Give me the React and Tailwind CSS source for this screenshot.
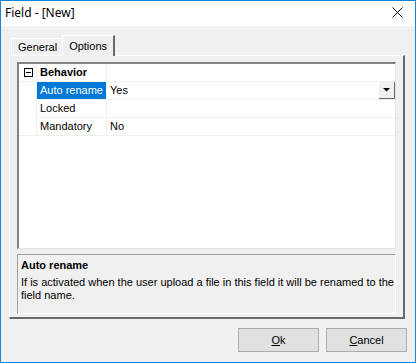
import React from 'react';

const rows = [
  { name: 'Auto rename', value: 'Yes', selected: true },
  { name: 'Locked', value: '' },
  { name: 'Mandatory', value: 'No' },
];

function DropArrow() {
  return (
    <div className="absolute right-0 top-0 w-[16px] h-[17px] bg-[#f0f0f0] border-r border-b border-[#696969] flex items-center justify-center">
      <svg width="9" height="6" viewBox="0 0 9 6">
        <path d="M1 1 H8 L4.5 4.5 Z" fill="#000" />
      </svg>
    </div>
  );
}

export default function App() {
  return (
    <div className="w-[416px] h-[363px] border border-[#1883d7] bg-[#f0f0f0] flex flex-col text-[11px] text-black font-['Liberation_Sans',Arial,sans-serif] select-none">
      {/* title bar */}
      <div className="h-[25px] bg-white flex items-center justify-between pl-[4px] pr-[12px] shrink-0">
        <span className="text-[12px] font-['Noto_Sans','Liberation_Sans',sans-serif] mt-[-2px]">Field - [New]</span>
        <svg width="11" height="11" viewBox="0 0 11 11" className="mt-[-2px]">
          <path d="M0.5 0.5 L10.5 10.5 M10.5 0.5 L0.5 10.5" stroke="#000" strokeWidth="1" />
        </svg>
      </div>

      {/* tabs */}
      <div className="flex items-end pl-[10px] mt-[8px] h-[21px] shrink-0">
        <div className="h-[17px] px-[6px] flex items-center border-t border-l border-white border-r-0 mr-[-1px] text-[#000]">General</div>
        <div className="h-[21px] px-[6px] flex items-center border-t border-l border-white border-r-2 border-r-[#696969] relative top-[1px] bg-[#f0f0f0] z-10">Options</div>
      </div>

      {/* tab page */}
      <div className="ml-[8px] w-[396px] h-[264px] border-t border-l border-white border-r-2 border-b-2 border-r-[#696969] border-b-[#696969] flex flex-col pt-[6px] px-[7px] pb-[3px] gap-[5px] shrink-0">
        {/* property grid */}
        <div className="h-[187px] bg-white border-t-2 border-l-2 border-[#828282] border-r border-b border-r-[#e3e3e3] border-b-[#e3e3e3] flex flex-col">
          <div className="flex h-[18px] border-b border-[#f0f0f0]">
            <div className="w-[18px] border-r border-[#f0f0f0] flex items-center justify-center pl-[2px]">
              <div className="w-[9px] h-[9px] border border-black flex items-center justify-center">
                <div className="w-[5px] h-px bg-black" />
              </div>
            </div>
            <div className="w-[70px] border-r border-[#f0f0f0] flex items-center pl-[3px] font-bold">Behavior</div>
            <div className="flex-1" />
          </div>
          {rows.map((r) => (
            <div key={r.name} className="flex h-[18px]">
              <div className="w-[18px] border-r border-[#f0f0f0]" />
              <div className={`w-[70px] border-r border-b border-[#f0f0f0] flex items-center pl-[3px] ${r.selected ? 'bg-[#0078d7] text-white' : ''}`}>{r.name}</div>
              <div className="flex-1 border-b border-[#f0f0f0] flex items-center pl-[3px] relative">
                {r.value}
                {r.selected && <DropArrow />}
              </div>
            </div>
          ))}
          <div className="border-t border-[#f0f0f0] mt-[-1px]" />
        </div>

        {/* description */}
        <div className="flex-1 border-t border-l border-[#a0a0a0] border-r border-b border-r-white border-b-white pl-[3px] pt-[4px] leading-[13px]">
          <div className="font-bold mb-[4px]">Auto rename</div>
          <div>If is activated when the user upload a file in this field it will be renamed to the field name.</div>
        </div>
      </div>

      {/* buttons */}
      <div className="flex justify-end gap-[7px] pr-[8px] mt-[9px]">
        <button className="w-[81px] h-[24px] bg-[#e1e1e1] border border-[#adadad] flex items-center justify-center">
          <span><span className="underline">O</span>k</span>
        </button>
        <button className="w-[81px] h-[24px] bg-[#e1e1e1] border border-[#adadad] flex items-center justify-center">
          <span><span className="underline">C</span>ancel</span>
        </button>
      </div>
    </div>
  );
}
